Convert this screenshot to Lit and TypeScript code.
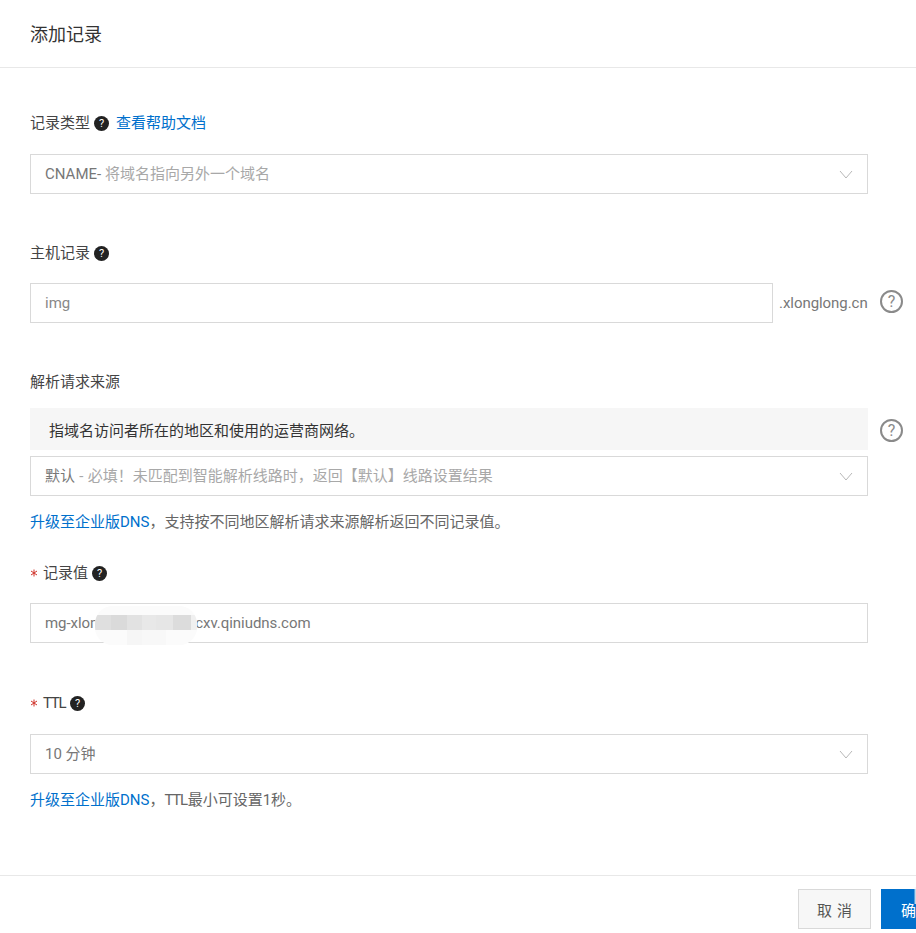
import { LitElement, html, css } from "lit";
import { customElement } from "lit/decorators.js";

const chevron = html`<svg class="chev" width="14" height="9" viewBox="0 0 14 9" fill="none" stroke="#b8b8b8" stroke-width="1"><path d="M1 1l6 7 6-7"/></svg>`;
const qDark = html`<span class="q-dark">?</span>`;
const star = html`<svg class="star" width="8" height="8" viewBox="0 0 8 8" fill="none" stroke="#d0342c" stroke-width="1"><path d="M4 .5v7M1 2l6 4M7 2L1 6"/></svg>`;

@customElement("app-root")
export class AppRoot extends LitElement {
  static styles = css`
    :host { display: block; width: 916px; height: 933px; overflow: hidden; background: #fff; position: relative;
      font-family: Roboto, "Noto Sans CJK SC", sans-serif; font-size: 15px; color: #444; }
    * { box-sizing: border-box; }
    header { height: 68px; border-bottom: 1px solid #e8e8e8; padding: 0 30px 2px; display: flex; align-items: center; font-size: 18px; color: #333; }
    main { padding: 0 48px 0 30px; height: 807px; }
    .label { height: 24px; display: flex; align-items: center; gap: 4px; color: #444; line-height: 24px; white-space: nowrap; }
    .star { flex: none; margin-right: 1px; }
    .narrow { letter-spacing: -1.3px; margin-right: 1px; }
    a { color: #0070cc; text-decoration: none; }
    .doc { margin-left: 3px; }
    .q-dark { width: 15px; height: 15px; border-radius: 50%; background: #222; color: #fff; font-size: 11px; line-height: 15px; text-align: center; flex: none; }
    .q-light { position: absolute; left: calc(100% + 12px); top: 50%; width: 23px; height: 23px; border-radius: 50%; border: 2px solid #8a8a8a; color: #8a8a8a; font-size: 16px; line-height: 19px; text-align: center; }
    .q-host { margin-top: -13px; }
    .q-info { margin-top: -10px; }
    .box { height: 40px; border: 1px solid #d9d9d9; display: flex; align-items: center; justify-content: space-between; padding: 0 14px; color: #777; white-space: nowrap; position: relative; line-height: 20px; }
    .box .ph { color: #a8a8a8; }
    .box .host { color: #888; }
    .wide { word-spacing: 0.6px; }
    .value { letter-spacing: -0.05px; }
    .chev { flex: none; }
    .rel { position: relative; }
    .hostrow { display: flex; align-items: center; position: relative; }
    .hostrow .box { flex: 1; }
    .suffix { margin-left: 6px; width: 89px; color: #777; white-space: nowrap; line-height: 20px; letter-spacing: -0.05px; }
    .info { height: 42px; background: #f6f6f6; display: flex; align-items: center; padding-left: 19px; color: #333; position: relative; }
    .help { height: 24px; line-height: 24px; color: #666; white-space: nowrap; margin-top: 14px; }
    .s1 { padding-top: 43px; }
    .sel1 { margin-top: 19px; }
    .s2 { margin-top: 47px; }
    .gap18 { margin-top: 18px; }
    .s3 { margin-top: 47px; }
    .gap14 { margin-top: 14px; }
    .gap6 { margin-top: 6px; }
    .s4 { margin-top: 27px; }
    .s5 { margin-top: 48px; }
    .gap19 { margin-top: 19px; }
    .blur { position: absolute; left: 64px; top: 2px; width: 102px; height: 39px; padding-top: 9px; display: flex; flex-direction: column; border-radius: 18px; overflow: hidden; background: #fbfbfb; }
    .blur i { display: block; height: 15px; flex: none; background: linear-gradient(90deg, #dfdfdf 0 16%, #dadada 16% 31%, #e2e2e2 31% 46%, #e8e8e8 46% 60%, #e6e6e6 60% 76%, #dcdcdc 76% 94%, #f0f0f0 94%); }
    .blur i + i { background: linear-gradient(90deg, #fbfbfb 0 31%, #f6f6f6 31% 46%, #f8f8f8 46% 70%, #fbfbfb 70%); }
    footer { height: 58px; border-top: 1px solid #e8e8e8; padding: 13px 0 0 798px; display: flex; gap: 10px; align-items: flex-start; }
    button { height: 40px; font: inherit; padding: 0; flex: none; }
    .cancel { width: 73px; background: #f7f7f7; border: 1px solid #d9d9d9; color: #555; letter-spacing: 5px; padding-left: 5px; }
    .ok { width: 73px; background: #0070cc; border: none; color: #fff; letter-spacing: 5px; padding-left: 7px; }
    .edge { position: absolute; left: 914px; top: 887px; width: 2px; height: 17px; background: linear-gradient(90deg, rgba(255,255,255,0.15), #f4f4f4); }
  `;
  render() {
    return html`
      <header>添加记录</header>
      <main>
        <div class="s1">
          <div class="label">记录类型 ${qDark}<a class="doc" href="#">查看帮助文档</a></div>
          <div class="box sel1"><span>CNAME-<span class="ph"> 将域名指向另外一个域名</span></span>${chevron}</div>
        </div>
        <div class="s2">
          <div class="label">主机记录 ${qDark}</div>
          <div class="hostrow gap18">
            <div class="box"><span class="host">img</span></div>
            <span class="suffix">.xlonglong.cn</span>
            <span class="q-light q-host">?</span>
          </div>
        </div>
        <div class="s3">
          <div class="label">解析请求来源</div>
          <div class="info gap14">指域名访问者所在的地区和使用的运营商网络。<span class="q-light q-info">?</span></div>
          <div class="box gap6"><span class="wide"><span>默认</span><span class="ph"> - 必填！未匹配到智能解析线路时，返回【默认】线路设置结果</span></span>${chevron}</div>
          <div class="help"><a href="#">升级至企业版DNS</a>，支持按不同地区解析请求来源解析返回不同记录值。</div>
        </div>
        <div class="s4">
          <div class="label">${star}记录值 ${qDark}</div>
          <div class="box gap18 rel">
            <span class="value">mg-xlongxxxxxxxxxxxxcxv.qiniudns.com</span>
            <div class="blur"><i></i><i></i></div>
          </div>
        </div>
        <div class="s5">
          <div class="label">${star}<span class="narrow">TTL</span> ${qDark}</div>
          <div class="box gap19"><span>10 分钟</span>${chevron}</div>
          <div class="help"><a href="#">升级至企业版DNS</a>，<span class="narrow">TTL</span>最小可设置1秒。</div>
        </div>
      </main>
      <footer>
        <button class="cancel">取消</button>
        <button class="ok">确定</button>
      </footer>
      <div class="edge"></div>
    `;
  }
}
